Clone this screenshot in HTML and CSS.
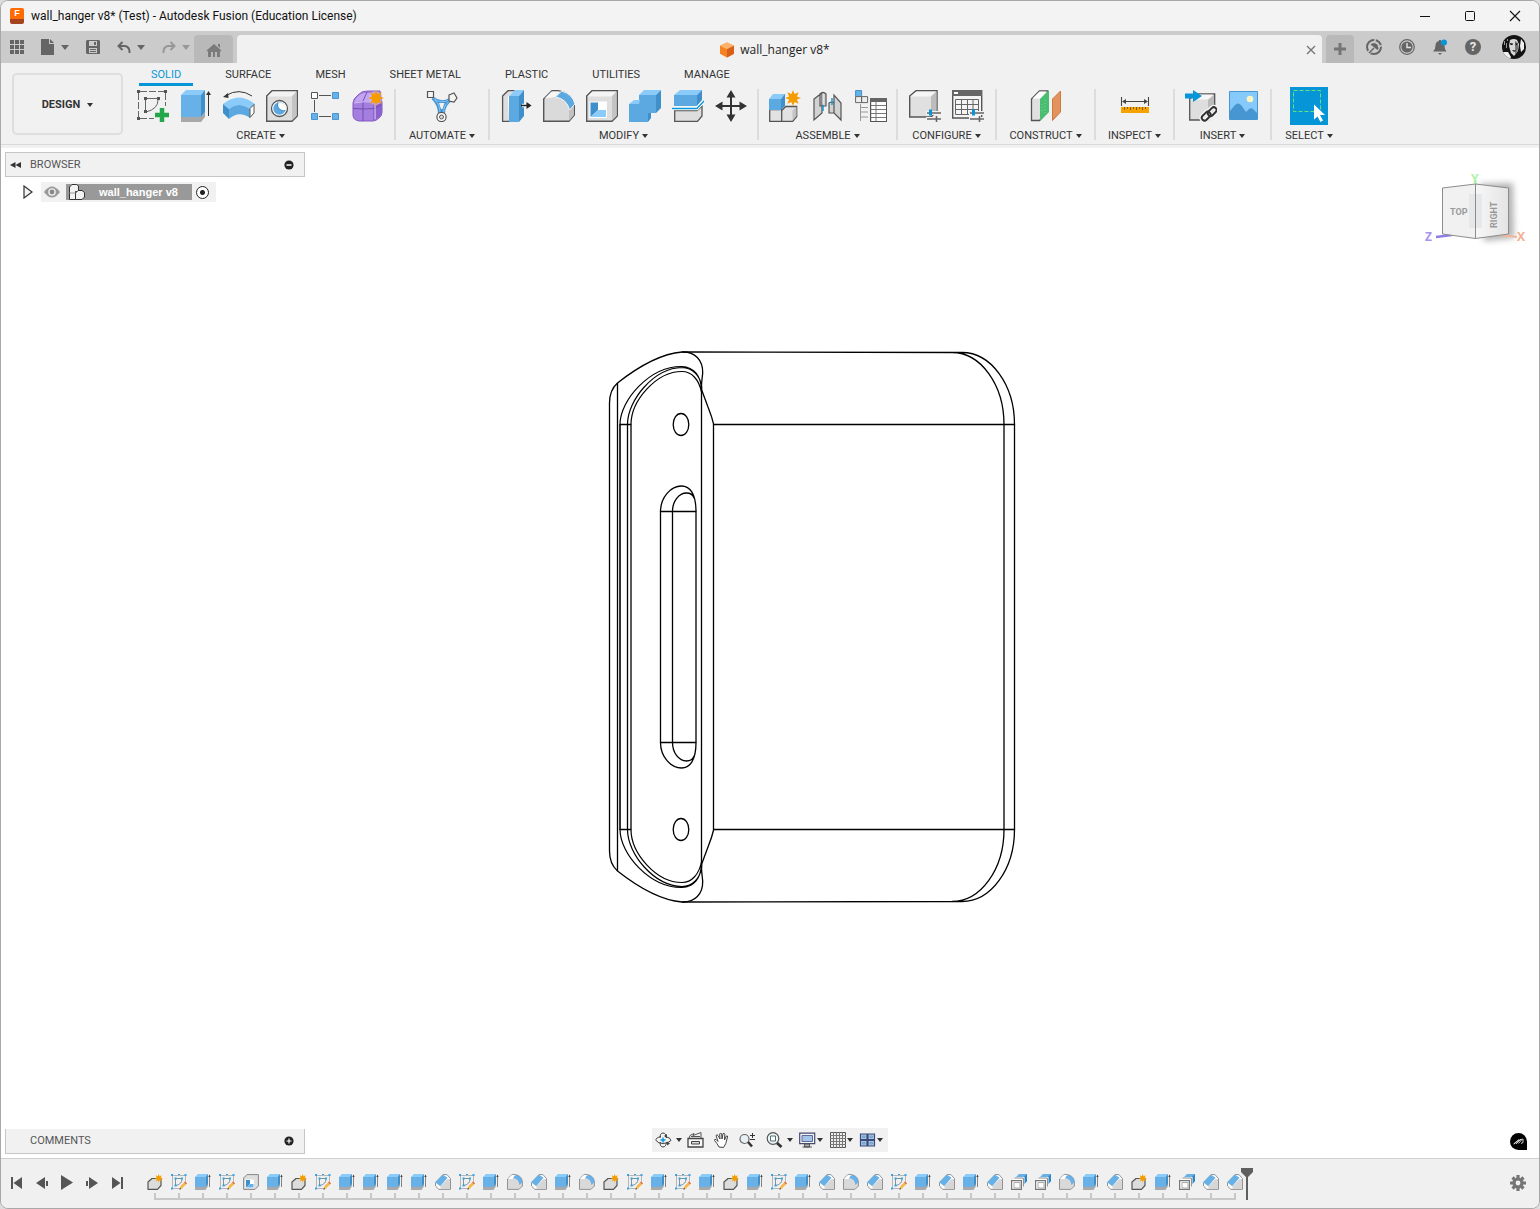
FILE: index.html
```html
<!DOCTYPE html>
<html lang="en">
<head>
<meta charset="utf-8">
<title>wall_hanger v8* (Test) - Autodesk Fusion (Education License)</title>
<link rel="stylesheet" href="styles.css">
</head>
<body>
<svg class="sprite" width="0" height="0" aria-hidden="true">
  <defs>
    <symbol id="star" viewBox="-8 -8 16 16"><path fill="#f59c00" d="M8 0 3.900 1.600 5.700 5.700 1.600 3.900 0 8-1.600 3.900-5.700 5.700-3.900 1.600-8 0-3.900-1.600-5.700-5.700-1.600-3.900 0-8 1.600-3.900 5.700-5.700 3.900-1.600z"/></symbol>
    <symbol id="tl-new" viewBox="0 0 16 16"><path d="M1 8 5 4.500H14V11.500L10.500 15.300H1z" fill="#dcdcdc" stroke="#555" stroke-width="1.200" stroke-linejoin="round"/><use href="#star" x="7.500" y="0" width="8.500" height="8.500"/></symbol>
    <symbol id="tl-sketch" viewBox="0 0 16 16"><path d="M1.500 1v13.500H9M1.500 1.500H14.500V9" fill="none" stroke="#b5b5b5"/><path d="M4.500 5v6.500M5 4.500h6M11 5q0 5-6 6.500" fill="none" stroke="#6f8796" stroke-width=".9"/><path d="M0 0h2v2H0zM7 0h2v1H7zM13.500 0h2v2h-2zM0 13.500h2v2H0zM3.500 3.500h2v2h-2zM10 3.500h2v2h-2zM3.500 10.500h2v2h-2z" fill="#39a3e0"/><path d="M8.500 15.500 9.500 12 13 8.500l2 2-4 4z" fill="#f7b84d"/><path d="m13 8.500 1-1 2 2-1 1z" fill="#dd6a32"/><path d="m8.300 15.700.7-2 1.300 1.300z" fill="#444"/></symbol>
    <symbol id="tl-extrude" viewBox="0 0 16 16"><path d="M0 12.500h10.500l2.500-3V12l-2.500 4H0z" fill="#a9a9a9"/><path d="M0 3h10.500v10H0z" fill="#67b1e8"/><path d="M0 3 3 0h10l-2.500 3z" fill="#8bcbf9"/><path d="m10.500 3 2.500-3v10l-2.500 3z" fill="#3f8fcb"/><path d="M14.500 2v11" stroke="#777" stroke-width=".9"/><path d="m13.300 3 1.200-2.500L15.700 3z" fill="#444"/></symbol>
    <symbol id="tl-shell" viewBox="0 0 16 16"><path d="M.6 4 4 .6h11.400V12L12 15.400H.6z" fill="#dedede" stroke="#888"/><path d="M2.500 5.500H11V14H2.500z" fill="#fff"/><path d="M3 6h4v4l-4 3.500z" fill="#3f8fcb"/><path d="M3 13.500 7 10h3.500v3.500z" fill="#67b1e8"/></symbol>
    <symbol id="tl-fillet" viewBox="0 0 16 16"><path d="M.5 5 5 .6h3q7 1 7.400 7.400V12L12 15.400H.5z" fill="#d9d9d9" stroke="#929292"/><path d="M1 5 5 1h3L5.500 5z" fill="#fff"/><path d="M6 4 9 .8Q15 2 15.500 8L12.500 11Q12 5 6 4z" fill="#67b1e8"/></symbol>
    <symbol id="tl-chamfer" viewBox="0 0 16 16"><path d="M.5 8.500 8 .6h4l3.500 4v10.800H4L.5 12z" fill="#fff" stroke="#929292"/><path d="M5.500 15v-3L12.500 5H15v10z" fill="#d6d6d6"/><path d="M.3 8.300 7.800.500 12.500 3.800 5.200 12.200z" fill="#67b1e8"/></symbol>
    <symbol id="tl-combine" viewBox="0 0 16 16"><path d="M5 3 8 0h8v7l-3 3.500H5z" fill="#67b1e8"/><path d="m13 3 3-3v7l-3 3.500z" fill="#2f86c4"/><path d="M3.500 4.500h8.500v8" fill="none" stroke="#fff" stroke-width="3"/><path d="M3.500 4h8.900v8.500" fill="none" stroke="#888"/><path d="M.6 6.600h9.800v8.800H.6z" fill="#fff" stroke="#777" stroke-width="1.200"/><path d="M3 8.500h6v5.500H3z" fill="#fff" stroke="#999" stroke-width=".8"/></symbol>
  </defs>
</svg>
<div class="app">
  <header class="titlebar">
    <span class="logo">F</span>
    <h1>wall_hanger v8* (Test) - Autodesk Fusion (Education License)</h1>
    <button class="win" aria-label="Minimize"><svg width="12" height="12"><path d="M1 6.500h10" stroke="#111"/></svg></button>
    <button class="win" aria-label="Maximize"><svg width="12" height="12"><rect x="1.500" y="1.500" width="9" height="9" rx="1" fill="none" stroke="#111"/></svg></button>
    <button class="win" aria-label="Close"><svg width="12" height="12"><path d="m1 1 10 10M11 1 1 11" stroke="#111" stroke-width="1.100"/></svg></button>
  </header>

  <nav class="docbar" aria-label="Documents">
    <div class="quick">
      <button aria-label="Data panel"><svg width="14" height="14" fill="#656565"><path d="M0 0h4v4H0zM5 0h4v4H5zM10 0h4v4h-4zM0 5h4v4H0zM5 5h4v4H5zM10 5h4v4h-4zM0 10h4v4H0zM5 10h4v4H5zM10 10h4v4h-4z"/></svg></button>
      <button aria-label="File"><svg width="14" height="16" fill="#656565"><path d="M0 0h8v5h5v11H0z"/><path d="m9 0 4 4H9z"/></svg><i class="caret"></i></button>
      <button aria-label="Save"><svg width="14" height="14"><path fill="#656565" fill-rule="evenodd" d="M1 0h12l1 1v13H1l-1-1V1zM3 1v5h8V1zM3 8v5h8V8z"/><path fill="#656565" d="M8 2h2v3H8zM4 9h6v1H4zM4 11h6v1H4z"/></svg></button>
      <button aria-label="Undo"><svg width="14" height="13"><path d="M1 5h7q5 1 4.500 7M5.500 1 1.500 5l4 4" fill="none" stroke="#656565" stroke-width="2"/></svg><i class="caret"></i></button>
      <button aria-label="Redo" class="off"><svg width="14" height="13"><path d="M13 5H6Q1 6 1.500 12M8.500 1l4 4-4 4" fill="none" stroke="#656565" stroke-width="2"/></svg><i class="caret"></i></button>
    </div>
    <button class="home" aria-label="Home"><svg width="16" height="15" fill="#7b7b7b"><path d="m8 1 7.500 6.500-1 1L14 8v6h-3V9H9v5H7V9H5v5H2V8l-.5.500-1-1zM12 1h2v4l-2-2z"/></svg></button>
    <div class="doctab">
      <span class="docname"><svg width="16" height="16"><path d="m8 .5 7 3.200v8L8 15.500l-7-3.800v-8z" fill="#f58220"/><path d="m8 .5 7 3.200-7 3.600-7-3.600z" fill="#ffb26b"/><path d="M8 7.300v8.200l7-3.800v-8z" fill="#d9601a"/></svg>wall_hanger v8*</span>
      <button aria-label="Close document"><svg width="10" height="10"><path d="m1 1 8 8M9 1 1 9" stroke="#777" stroke-width="1.400"/></svg></button>
    </div>
    <button class="add" aria-label="New document"><svg width="14" height="14"><path d="M7 1v12M1 7h12" stroke="#757575" stroke-width="3"/></svg></button>
    <div class="status">
      <button aria-label="Extensions"><svg width="16" height="16"><circle cx="8" cy="8" r="7" fill="none" stroke="#656565" stroke-width="2"/><path d="M2.500 14 7 9.500" stroke="#cbcbcb" stroke-width="3.500"/><path d="M3 14 8 9" stroke="#656565" stroke-width="1.400"/><path d="M4.500 5.500 11.500 11q2.500-2.500 0-5L10 4.500Q7 3 4.500 5.500z" fill="#656565"/><path d="m9.500 0-1.500 4M16 6.500l-4 1.500" stroke="#cbcbcb" stroke-width="1.600"/></svg></button>
      <button aria-label="Job status"><svg width="16" height="16"><circle cx="8" cy="8" r="7.300" fill="none" stroke="#656565" stroke-width="1.200"/><circle cx="8" cy="8" r="5.600" fill="#656565"/><path d="M8 4v4.500h4" fill="none" stroke="#e4e4e4" stroke-width="1.400"/></svg></button>
      <button aria-label="Notifications"><svg width="16" height="16"><path d="M1 12.500q2.500-2 2.500-6T7 2V1h2v1q3.500.500 3.500 4.500t2 6z" fill="#656565"/><path d="M6 14h4l-2 2z" fill="#656565"/><circle cx="12" cy="3.500" r="3" fill="#0696d7"/></svg></button>
      <button class="help" aria-label="Help">?</button>
      <button class="me" aria-label="Account"><svg width="24" height="24" viewBox="0 0 24 24"><clipPath id="face"><circle cx="12" cy="12" r="12"/></clipPath><g clip-path="url(#face)"><path fill="#131313" d="M0 0h24v24H0z"/><path fill="#d8d8d8" d="M8 5q4-2 7 0l2 4-1 7-4 5-3-3-2-7z"/><path fill="#777" d="m13 6 3 2v7l-3 5 0-8z"/><path fill="#f0f0f0" d="m1 17 5 0 3 5-1 2H2zM19 4l3 4v6l-3 3-1-6z"/><path fill="#1a1a1a" d="m8 8 3 .5-.5 1.500-2 0zM13 8.500l3 0-1.500 2zM10 15l4 .5-2 1.500z"/><path fill="#999" d="M2 6h1v4H2zM4 8h1v5H4zM5 4h1v2H5z"/></g></svg></button>
    </div>
  </nav>

  <section class="ribbon">
    <button class="workspace">DESIGN <i class="caret"></i></button>
    <div class="tools">
      <div class="tabs">
        <button class="on">SOLID</button><button>SURFACE</button><button>MESH</button><button>SHEET METAL</button><button>PLASTIC</button><button>UTILITIES</button><button>MANAGE</button>
      </div>
      <div class="groups">
        <div class="group create">
          <div class="icons">
            <button aria-label="Create sketch"><svg viewBox="0 0 32 32"><path d="M3 1.500h24M1.500 3v24M28.500 3v13M3 28.500h14" fill="none" stroke="#666" stroke-dasharray="7 2"/><path d="M8.500 10v10M10 8.500h10M21 10q0 9-12 12" fill="none" stroke="#666"/><path fill="#555" d="M0 0h3v3H0zM27 0h3v3h-3zM0 27h3v3H0zM7 7h3v3H7zM20 7h3v3h-3zM7 20h3v3H7z"/><path d="M25 18v14M18 25h14" stroke="#22a84b" stroke-width="4.500"/></svg></button>
            <button aria-label="Extrude"><svg viewBox="0 0 32 32"><path d="M1 27h20l4-5v5l-4 5H1z" fill="#a8a8a8"/><path d="M1 5h20v22H1z" fill="#67b1e8"/><path d="m1 5 5-5h19l-4 5z" fill="#8bcbf9"/><path d="m21 5 4-5v22l-4 5z" fill="#3f8fcb"/><path d="M28.500 4v22" stroke="#333"/><path d="m26 5 2.500-4L31 5z" fill="#333"/></svg></button>
            <button aria-label="Revolve"><svg viewBox="0 0 32 32"><path d="M0 14q16-13 32 0L27 19q-10-8-21 0z" fill="#8bcbf9"/><path d="M6 19q10-8 21 0v9q-11-8-21 1z" fill="#5ca9e2"/><path d="m0 14 6 5v10l-6-6z" fill="#3f8fcb"/><path d="m27 18.500 4-4V23l-4 4.500z" fill="#fff" stroke="#555"/><path d="M3 5.500Q16-2.500 29 6" fill="none" stroke="#333"/><path d="m0 7 5-4 .5 5z" fill="#333"/></svg></button>
            <button aria-label="Hole"><svg viewBox="0 0 32 32"><path d="M.7 6 6 .7h25.300V26L26 31.300H.7z" fill="#dedede" stroke="#555" stroke-width="1.400"/><path d="m1.500 6.500 5-5h24l-5 5z" fill="#f2f2f2"/><path d="m26 6.500 4.500-5V26L26 30.500z" fill="#c4c4c4"/><circle cx="13.500" cy="18.500" r="8" fill="#fff" stroke="#555" stroke-width="1.300"/><circle cx="13.500" cy="18.500" r="6.200" fill="#5ca9e2"/><path d="M12 12.500a6 6 0 0 0 8 8q1-8-8-8z" fill="#fff"/><path d="M12 12.500a6 6 0 0 0 7.500 8" fill="none" stroke="#3f8fcb" stroke-width="1.200"/></svg></button>
            <button aria-label="Pattern"><svg viewBox="0 0 32 32"><path d="M10 5.500h12M10 26.500h12M5.500 10v12" stroke="#555"/><path d="M2.500 2.500h6v6h-6z" fill="#fff" stroke="#555"/><path d="M23.500 2.500h6v6h-6zM2.500 23.500h6v6h-6zM23.500 23.500h6v6h-6z" fill="#67b1e8" stroke="#4795d1"/></svg></button>
            <button aria-label="Create form"><svg viewBox="0 0 32 32"><path d="M1 13Q1 9 6 5l4-3q3-1 8-1h10l2 12v9q0 4-3 6-3 3-6 3H7q-6-1-6-6z" fill="#a57fdf" stroke="#8258c4"/><path d="M2 12q4-8 10-9h12l-3 8q-9 0-19 1z" fill="#c3a5f0"/><path d="m24 15 6-2v8q-1 6-6 8z" fill="#8b62cc"/><path d="M1 18.500q12 1 22 0l6-4M11 31V11l4-9M22 12v18" fill="none" stroke="#6e47ae" stroke-width=".9"/><path d="M2 13q10-2 20-1l6-5M23 12v17" fill="none" stroke="#d5bff5"/><circle cx="23.500" cy="8" r="7" fill="#d5bff5" opacity=".5"/><use href="#star" x="16" y="0" width="16" height="16"/></svg></button>
          </div>
          <button class="menu">CREATE <i class="caret"></i></button>
        </div>
        <div class="group automate">
          <div class="icons"><button aria-label="Automated modeling"><svg viewBox="0 0 32 32"><path d="M8 7q7 6 15.500 1L26 11q-7 4-7 13h-7Q12 15 5.500 9z" fill="#4795d1"/><path d="M7.500 8.500q8 6 16.500 1M14 23q0-8-5-13M17.500 23q0-8 6-12" fill="none" stroke="#86c9fb"/><path d="M13 13h5.500l-2 6h-1.500z" fill="#f1f1f1"/><path d="M1.500 1.500h6v6h-6zM23 5l5-2 3 5-3 4-5-1z" fill="#f5f5f5" stroke="#555" stroke-width="1.200"/><circle cx="15.500" cy="27" r="4.600" fill="#fff" stroke="#555" stroke-width="1.200"/><circle cx="15.500" cy="27" r="2" fill="#ddd" stroke="#555"/></svg></button></div>
          <button class="menu">AUTOMATE <i class="caret"></i></button>
        </div>
        <div class="group modify">
          <div class="icons">
            <button aria-label="Press pull"><svg viewBox="0 0 32 32"><path d="M2.600 6 8 .7h6V25L9 31.300H2.600z" fill="#dedede" stroke="#555" stroke-width="1.300"/><path d="M8 7 14 1v24l-5 6z" fill="#fff"/><path d="M9 6h10v26H9z" fill="#5ca9e2"/><path d="m9 6 6-6h9l-5 6z" fill="#8bcbf9"/><path d="m19 6 5-6v26l-5 6z" fill="#3f8fcb"/><path d="M22 15.500h6" stroke="#fff" stroke-width="3.500"/><path d="M21 15.500h7" stroke="#222" stroke-width="1.400"/><path d="m26.500 12 5 3.500-5 3.500z" fill="#222"/></svg></button>
            <button aria-label="Fillet"><svg viewBox="0 0 32 32"><path d="M.7 9 9 .7h6q14 2 16.300 15V25L26 31.300H.7z" fill="#dadada" stroke="#555" stroke-width="1.400"/><path d="m1.500 8.500 7-7H17L12 7z" fill="#f7f7f7"/><path d="m26 19 5-4v10l-5 6z" fill="#c2c2c2"/><path d="m12.500 7 6-6q11 3 13.500 13l-5.500 6Q24 9 12.500 7z" fill="#5ca9e2" stroke="#f6f6f6"/></svg></button>
            <button aria-label="Shell"><svg viewBox="0 0 32 32"><path d="M.7 6 6 .7h25.300V26L26 31.300H.7z" fill="#dedede" stroke="#555" stroke-width="1.400"/><path d="m1.500 6.500 5-5h24l-5 5z" fill="#f4f4f4"/><path d="m26 6.500 4.500-5V26L26 30.500z" fill="#c4c4c4"/><path d="M3.500 11.500H21v16.500H3.500z" fill="#fff"/><path d="M4.500 12.500H12V20l-7.500 7z" fill="#3f8fcb"/><path d="M4.500 27 12 20h8v7z" fill="#8bcbf9"/></svg></button>
            <button aria-label="Combine"><svg viewBox="0 0 32 32"><path d="M0 14h10V5h17v18h-8v9H0z" fill="#5ca9e2"/><path d="m0 14 5-4h6l-1 4zM10 5l5-5h17l-5 5z" fill="#8bcbf9"/><path d="m27 5 5-5v18l-5 5zM19 23h3v5l-3 4z" fill="#3f8fcb"/></svg></button>
            <button aria-label="Split body"><svg viewBox="0 0 32 32"><path d="M2.700 20.500H25L30 16v10l-4.500 5.300H2.700z" fill="#dedede" stroke="#555" stroke-width="1.300"/><path d="M2 5h23v11H2z" fill="#5ca9e2"/><path d="m2 5 6-5h22l-5 5z" fill="#8bcbf9"/><path d="m25 5 5-5v10l-5 6z" fill="#3f8fcb"/><path d="M0 18.500h25L32 11" fill="none" stroke="#fff" stroke-width="3.500"/><path d="M0 18.500h25L32 11" fill="none" stroke="#0696d7" stroke-width="1.400"/></svg></button>
            <button aria-label="Move"><svg viewBox="0 0 32 32"><path d="M16 5v22M5 16h22" stroke="#333" stroke-width="2"/><path d="m16 0 4.500 7.500h-9zM16 32l4.500-7.500h-9zM0 16l7.500-4.500v9zM32 16l-7.500-4.500v9z" fill="#333"/></svg></button>
          </div>
          <button class="menu">MODIFY <i class="caret"></i></button>
        </div>
        <div class="group assemble">
          <div class="icons">
            <button aria-label="New component"><svg viewBox="0 0 32 32"><path d="M.7 19.500h12v11.800H.7zM12.700 20.500l4-4h11v10l-4 4.800h-11z" fill="#e2e2e2" stroke="#555" stroke-width="1.300"/><path d="m23.500 20.500 4-3.500v9l-4 4.500z" fill="#c4c4c4"/><path d="M0 9h12v11H0z" fill="#5ca9e2"/><path d="m0 9 4-5h13l-5 5z" fill="#8bcbf9"/><path d="m12 9 4-5v12l-4 4z" fill="#3f8fcb"/><use href="#star" x="16" y="0" width="16" height="16"/></svg></button>
            <button aria-label="Joint"><svg viewBox="0 0 32 32"><g fill="#d2d2d2" stroke="#555" stroke-width="1.200"><path d="M2 9 10 3v20l-8 7zM8 4q3-3 6 0v12H8zM29 30l-7-7V5l7 8zM17 13q3-2 5 0v10h-5z"/></g><path d="M11 15v6M20 8v7" stroke="#0696d7" stroke-width="1.400"/><path d="M11 3.500v11" stroke="#f2f2f2"/></svg></button>
            <button aria-label="Bill of materials"><svg viewBox="0 0 32 32"><path d="M.6.600h6v6h-6z" fill="#67b1e8" stroke="#3f8fcb"/><path d="M.6 6.600h6v6h-6zM6.600 6.600h6v6h-6z" fill="#eee" stroke="#666"/><path d="M5.500 14v17M5.500 17.500H13M5.500 22H13M5.500 27H13" stroke="#999"/><path d="M15.600 8.600h16v23h-16z" fill="#fff" stroke="#555" stroke-width="1.200"/><path d="M15 8h17v4H15z" fill="#666"/><path d="M16 15.500h15M16 19.500h15M16 23.500h15M16 27.500h15M21 12v19" stroke="#777"/></svg></button>
          </div>
          <button class="menu">ASSEMBLE <i class="caret"></i></button>
        </div>
        <div class="group configure">
          <div class="icons">
            <button aria-label="Configure"><svg viewBox="0 0 32 32"><path d="M.7 6 7 .7h21V21L22 27H.7z" fill="#e0e0e0" stroke="#555" stroke-width="1.400"/><path d="m1.500 6.500 6-5h20l-6 5z" fill="#f5f5f5"/><path d="m22 6.500 5.500-5V21L22 26z" fill="#bcbcbc"/><path d="M17 23h15M17 29h15" stroke="#f1f1f1" stroke-width="4"/><path d="M18 23h14M18 29h14M27.500 26v6" stroke="#666" stroke-width="1.600"/><path d="M21.500 19.500v6" stroke="#0696d7" stroke-width="3"/></svg></button>
            <button aria-label="Configuration table"><svg viewBox="0 0 32 32"><path d="M.7.700h29V28H.7z" fill="#f5f5f5" stroke="#555" stroke-width="1.400"/><path d="M0 0h30v6H0z" fill="#666"/><path d="M2 2h4v2H2z" fill="#fff"/><path d="M3.500 9.500h23v15h-23zM3.500 14.500h23M3.500 19.500h23M9.500 9.500v15M15.500 9.500v15M21 9.500v15" fill="none" stroke="#666"/><path d="M17 23h15M17 29h15" stroke="#f1f1f1" stroke-width="4"/><path d="M18 23h14M18 29h14M27.500 26v6" stroke="#666" stroke-width="1.600"/><path d="M21.500 19.500v6" stroke="#0696d7" stroke-width="3"/></svg></button>
          </div>
          <button class="menu">CONFIGURE <i class="caret"></i></button>
        </div>
        <div class="group construct">
          <div class="icons"><button aria-label="Offset plane"><svg viewBox="0 0 32 32"><path d="m1.500 9 8-8h8v21l-8 8.500h-8z" fill="#e0e0e0" stroke="#555" stroke-width="1.300"/><path d="m2.500 8.500 7-7h7l-6 7z" fill="#fff"/><path d="m10 9 9-9v22l-9 9z" fill="#49bd70"/><path d="M12 14v9M15 10v14" stroke="#7bd795" stroke-dasharray="1 2"/><path d="m22.500 9 8-8v21l-8 8.500z" fill="#e3945c" stroke="#cc7b45"/></svg></button></div>
          <button class="menu">CONSTRUCT <i class="caret"></i></button>
        </div>
        <div class="group inspect">
          <div class="icons"><button aria-label="Measure"><svg viewBox="0 0 32 32"><path d="M2.500 7v9M29.500 7v9M5 11.500h22" stroke="#444" stroke-width="1.100"/><path d="m3 11.500 4-2.500v5zM29 11.500l-4-2.500v5z" fill="#444"/><path d="M2 17h28v6H2z" fill="#f5a300"/><path d="M5.500 17v3M8.500 17v2M11.500 17v3M14.500 17v2M17.500 17v3M20.500 17v2M23.500 17v3M26.500 17v2" stroke="#8a5c00"/></svg></button></div>
          <button class="menu">INSPECT <i class="caret"></i></button>
        </div>
        <div class="group insert">
          <div class="icons">
            <button aria-label="Insert derive"><svg viewBox="0 0 32 32"><path d="m4.700 9 7-5h18v18l-6 8h-19z" fill="#dedede" stroke="#555" stroke-width="1.300"/><path d="m5.500 9.500 7-5h16l-6 5z" fill="#f7f7f7"/><path d="m23 10 6-5v16l-6 7z" fill="#bbb"/><path d="M0 3.500h8V0l9 6-9 6V8.500H0z" fill="#0696d7"/><g fill="none" stroke="#f4f4f4" stroke-width="5"><rect x="16" y="23.500" width="10" height="5.500" rx="2.750" transform="rotate(-45 21 26)"/><rect x="22" y="19" width="10" height="5.500" rx="2.750" transform="rotate(-45 27 21.500)"/></g><g fill="none" stroke="#333" stroke-width="2"><rect x="16" y="23.500" width="10" height="5.500" rx="2.750" transform="rotate(-45 21 26)"/><rect x="22" y="19" width="10" height="5.500" rx="2.750" transform="rotate(-45 27 21.500)"/></g></svg></button>
            <button aria-label="Canvas"><svg viewBox="0 0 32 32"><path d="M1.500 1.500h28v28h-28z" fill="#86c9fb" stroke="#4795d1"/><path d="M2 21 7 15q3-3 6 0l5 7 3-3q3-2 5 1l3 3v6H2z" fill="#4795d1"/><circle cx="22" cy="9" r="3.300" fill="#fff3bf"/></svg></button>
          </div>
          <button class="menu">INSERT <i class="caret"></i></button>
        </div>
        <div class="group select">
          <div class="icons"><button class="active" aria-label="Select"><svg class="wide" viewBox="0 0 38 38"><path d="M3.500 3.500h27v21h-27z" fill="none" stroke="#6be07b" stroke-dasharray="4 2"/><path d="M24 17.500v15l3.500-3 3 5.500 2.500-1.500-3-5.500h5z" fill="#fff"/></svg></button></div>
          <button class="menu">SELECT <i class="caret"></i></button>
        </div>
      </div>
    </div>
  </section>

  <main class="stage">
    <svg class="model" viewBox="1 148 1538 1010" role="img" aria-label="wall_hanger model">
      <g fill="none" stroke="#000" stroke-width="1.300">
        <path d="M609.500 403v448M617.500 383v488M627.500 424v406M631 424v406M701.500 386v482M713.500 424v406M1004 424v406M1014.500 424v406M660.500 511v232M672.500 511v232M696 511v232"/>
        <path d="M620 424v406" stroke="#333" stroke-width="2"/>
        <g id="end">
          <path d="M609.500 403C609.500 394 613 387 617.500 383 634 370 658 354 682 352 695 351.500 703 360 702.700 373 702 380 701 385 701.700 390L708 407Q712 417 713.700 424.500"/>
          <path d="M682 352 957 352.500H962A52.500 72 0 0 1 1014.500 424.500M952 352.500A52 72 0 0 1 1004 424.500"/>
          <path d="M620 424.500C620 400 650 366 682 366.500 694 367 701 376 701.500 390M627.500 424.500C627.500 400 654 368 682 367.500 693 368 700 376 701.500 386M631 424.500C631 401 656 371.500 682 371.500 692 371.500 699 380 701.500 392" stroke-width="1.200"/>
          <path d="M620 424.500h11M713.500 424.500h301M660.500 511.500H696"/>
          <ellipse cx="681" cy="424.500" rx="7.800" ry="11"/>
          <path d="M660.500 511.500C660.500 497 671 486 681.500 486 690 486 696 494 696 511.500M672.500 511.500C672.500 501 679 493 686.500 493 690 493 693 495 694 498"/>
        </g>
        <use href="#end" transform="matrix(1 0 0 -1 0 1254)"/>
      </g>
    </svg>
    <div class="overlay">
      <div class="top">
        <aside class="browser">
          <div class="panel head"><svg width="12" height="8" fill="#333"><path d="M5.500 1v6L0 4zM11 1v6L5.500 4z"/></svg><span>BROWSER</span><button aria-label="Collapse panel"><svg width="10" height="10"><circle cx="5" cy="5" r="4.600" fill="#222"/><path d="M2.500 5h5" stroke="#fff" stroke-width="1.400"/></svg></button></div>
          <div class="tree">
            <button aria-label="Expand"><svg width="10" height="14"><path d="M1 1v12l8-6z" fill="#f3f3f3" stroke="#333" stroke-width="1.200"/></svg></button>
            <div class="node">
              <svg width="16" height="12"><path d="M0 6q8-11 16 0-8 11-16 0z" fill="#999"/><circle cx="8" cy="6" r="3.800" fill="#eee"/><circle cx="8" cy="6" r="2.400" fill="#888"/></svg>
              <div class="item"><svg width="16" height="16"><g fill="#f2f2f2" stroke="#333"><path d="M.5 3 3 .5h4.500L9.500 2v5.500h-3v8h-6z"/><path d="M6.500 9 9 6.500h4l2.500 2V13L13 15.500H6.500z"/><path d="M.5 9h6" stroke="#999"/></g></svg><span>wall_hanger v8</span></div>
              <label class="radio"><input type="radio" name="active" aria-label="Activate component" checked></label>
            </div>
          </div>
        </aside>
        <svg class="cube" width="116" height="80" viewBox="1418 168 116 80" role="img" aria-label="View cube">
          <defs><filter id="soft" x="-30%" y="-30%" width="160%" height="160%"><feGaussianBlur stdDeviation="3"/></filter><linearGradient id="side"><stop stop-color="#f7f7f7"/><stop offset="1" stop-color="#e4e4e4"/></linearGradient></defs>
          <path d="m1480 184 33-1 1 55-30 3z" fill="#999" opacity=".75" filter="url(#soft)"/>
          <path d="M1475.500 180v4" stroke="#b8f5b4" stroke-width="2.500"/><path d="M1436 237 1452 235" stroke="#8f7be8" stroke-width="2.500"/><path d="m1500 235 17 2" stroke="#f3b59d" stroke-width="2"/>
          <path d="m1442.500 188 33-4v54.500l-33-4.500z" fill="#f1f1f1"/><path d="m1475.500 184 33 4v46l-33 4.500z" fill="url(#side)"/>
          <path d="M1469 194h13v34h-13z" fill="#dfe2e6" opacity=".7"/>
          <path d="m1442.500 188 33-4 33 4v46l-33 4.500-33-4.500zM1475.500 184v54" fill="none" stroke="#8c8c8c"/>
          <g class="cubetext"><text x="1450" y="215">TOP</text><text transform="translate(1497 228) rotate(-90)">RIGHT</text></g>
          <g class="axes"><text x="1471" y="183" fill="#aef3aa">Y</text><text x="1425" y="241" fill="#a893f0">Z</text><text x="1517" y="241" fill="#f3ad92">X</text></g>
        </svg>
      </div>
      <div class="bottom">
        <div class="panel comments"><span>COMMENTS</span><button aria-label="Add comment"><svg width="10" height="10"><circle cx="5" cy="5" r="4.600" fill="#222"/><path d="M2.500 5h5M5 2.500v5" stroke="#fff" stroke-width="1.200"/></svg></button></div>
        <div class="navbar">
          <button class="drop roomy" aria-label="Orbit"><svg width="17" height="16"><g fill="none" stroke="#444"><path d="M6 4.500Q0 6 1 8.500q2 3 7 3t8-3q0-3-6-4"/><path d="M5 6Q5 1 8 1t3.500 5M5 10q0 5 3 5t3.500-5"/></g><path d="M5.500 8h5M8 5.500v5" stroke="#0696d7" stroke-width="1.400"/><path d="m12 2 0 4-3-2zM12 9.500l3 2-3 2z" fill="#444"/></svg><i class="caret"></i></button>
          <button aria-label="Look at"><svg width="17" height="16"><path d="M1 6.500h15v8.500H1z" fill="#f7f7f7" stroke="#444" stroke-width="1.300"/><path d="M4.500 9.500h8V12h-8z" fill="#ddd" stroke="#444"/><path d="m2 6 1-2.500 4-2-1 2 8-3v5.500M4 4.500h9" fill="none" stroke="#555"/></svg></button>
          <button aria-label="Pan"><svg width="17" height="16"><path d="M6 15Q4 11 1.500 8.500 1 7 3 7.500L5 9.500 3 3.500q1-1.500 2 0L7 7 6.700 2q1-2 2 0L9 7l1-5.300q1.500-1 1.800.500L11.500 8l1.800-4q1.700-.5 1.200 1-1.500 8-4 10.500z" fill="#fff" stroke="#444" stroke-linejoin="round"/></svg></button>
          <button aria-label="Zoom"><svg width="17" height="16"><circle cx="5.500" cy="7" r="4.500" fill="#e7f0f5" stroke="#666" stroke-width="1.200"/><path d="m9 10 4 4.500" stroke="#333" stroke-width="2.500"/><path d="M11 3.500h5M13.500 1v5M11 7.500h5" stroke="#333"/></svg></button>
          <button class="drop roomy" aria-label="Fit"><svg width="17" height="16"><circle cx="7" cy="6.500" r="5.800" fill="#eef5f7" stroke="#555" stroke-width="1.200"/><path d="M4.500 4h5v5h-5z" fill="#fff" stroke="#507070"/><path d="m11 11 4.500 4" stroke="#333" stroke-width="2.800"/></svg><i class="caret"></i></button>
          <button class="drop" aria-label="Display settings"><svg width="17" height="16"><path d="M.7 1.200h15v10.500H.7z" fill="#f5f5f5" stroke="#454a6b" stroke-width="1.200"/><path d="M3 3.500h10.500v6H3z" fill="#a4c4e8" stroke="#5a6aa0"/><path d="M5.500 12h5v3h-5zM3.500 15h9.500" fill="#aaa" stroke="#555"/></svg><i class="caret"></i></button>
          <button class="drop" aria-label="Grid and snaps"><svg width="17" height="16"><path d="M1.500.500h15v15h-15z" fill="#eee" stroke="#555"/><path d="M4.500 0v16M7.500 0v16M10.500 0v16M13.500 0v16M1 3.500h16M1 6.500h16M1 9.500h16M1 12.500h16" stroke="#777"/></svg><i class="caret"></i></button>
          <button class="drop" aria-label="Viewports"><svg width="17" height="16"><path d="M1.500 2h6.500v5.500H1.500zM9 2h6.500v5.500H9zM1.500 8.500h6.500V14H1.500zM9 8.500h6.500V14H9z" fill="#a8c8e8" stroke="#3d4878" stroke-width="1.200"/><path d="M3.500 4h2.500v1.500H3.500zM11 4h2.500v1.500H11zM3.500 10.500h2.500V12H3.500zM11 10.500h2.500V12H11z" fill="none" stroke="#6f9ecb"/></svg><i class="caret"></i></button>
        </div>
        <button class="assist" aria-label="Assistant"><svg width="17" height="17"><path d="M8.500 0a8.500 8.500 0 0 1 8.500 8.500V17H8.500a8.500 8.500 0 0 1 0-17z"/><path d="M3.500 11 9 6.500M6 11l5-5M8.500 10.500l3-3.500M4 11q5-5 9-5v3.500l-2 1" fill="none" stroke="#e8e8e8" stroke-width=".9"/></svg></button>
      </div>
    </div>
  </main>

  <footer class="timeline">
    <div class="play">
      <button aria-label="Start"><svg width="14" height="14" fill="#555"><path d="M1 1h2v12H1zM12 1v12L3.500 7z"/></svg></button>
      <button aria-label="Step back"><svg width="14" height="14" fill="#555"><path d="M10 1v12L1 7zM11 5h2v5h-2z"/></svg></button>
      <button aria-label="Play"><svg width="14" height="16" fill="#555"><path d="M1 0v15l12-7.500z"/></svg></button>
      <button aria-label="Step forward"><svg width="14" height="14" fill="#555"><path d="M4 1v12l9-6zM1 5h2v5H1z"/></svg></button>
      <button aria-label="End"><svg width="14" height="14" fill="#555"><path d="M11 1h2v12h-2zM2 1v12l8.500-6z"/></svg></button>
    </div>
    <div class="history">
      <ol>
        <li><svg><use href="#tl-new"/></svg></li><li><svg><use href="#tl-sketch"/></svg></li><li><svg><use href="#tl-extrude"/></svg></li><li><svg><use href="#tl-sketch"/></svg></li><li><svg><use href="#tl-shell"/></svg></li><li><svg><use href="#tl-extrude"/></svg></li>
        <li><svg><use href="#tl-new"/></svg></li><li><svg><use href="#tl-sketch"/></svg></li><li><svg><use href="#tl-extrude"/></svg></li><li><svg><use href="#tl-extrude"/></svg></li><li><svg><use href="#tl-extrude"/></svg></li><li><svg><use href="#tl-extrude"/></svg></li><li><svg><use href="#tl-chamfer"/></svg></li><li><svg><use href="#tl-sketch"/></svg></li><li><svg><use href="#tl-extrude"/></svg></li><li><svg><use href="#tl-fillet"/></svg></li><li><svg><use href="#tl-chamfer"/></svg></li><li><svg><use href="#tl-extrude"/></svg></li><li><svg><use href="#tl-fillet"/></svg></li>
        <li><svg><use href="#tl-new"/></svg></li><li><svg><use href="#tl-sketch"/></svg></li><li><svg><use href="#tl-extrude"/></svg></li><li><svg><use href="#tl-sketch"/></svg></li><li><svg><use href="#tl-extrude"/></svg></li>
        <li><svg><use href="#tl-new"/></svg></li><li><svg><use href="#tl-extrude"/></svg></li><li><svg><use href="#tl-sketch"/></svg></li><li><svg><use href="#tl-extrude"/></svg></li><li><svg><use href="#tl-chamfer"/></svg></li><li><svg><use href="#tl-fillet"/></svg></li><li><svg><use href="#tl-chamfer"/></svg></li><li><svg><use href="#tl-sketch"/></svg></li><li><svg><use href="#tl-extrude"/></svg></li><li><svg><use href="#tl-chamfer"/></svg></li><li><svg><use href="#tl-extrude"/></svg></li><li><svg><use href="#tl-chamfer"/></svg></li><li><svg><use href="#tl-combine"/></svg></li><li><svg><use href="#tl-combine"/></svg></li><li><svg><use href="#tl-fillet"/></svg></li><li><svg><use href="#tl-extrude"/></svg></li><li><svg><use href="#tl-chamfer"/></svg></li>
        <li><svg><use href="#tl-new"/></svg></li><li><svg><use href="#tl-extrude"/></svg></li><li><svg><use href="#tl-combine"/></svg></li><li><svg><use href="#tl-chamfer"/></svg></li><li><svg><use href="#tl-chamfer"/></svg></li>
      </ol>
      <div class="rail"></div>
    </div>
    <svg class="marker" width="12" height="32" fill="#5f5f5f"><path d="M0 0h12v4L7 9v23H5V9L0 4z"/></svg>
    <button class="gear" aria-label="Timeline settings"><svg width="16" height="16" viewBox="-8 -8 16 16"><circle r="4" fill="none" stroke="#757575" stroke-width="3.200"/><path d="M0-8v3M0 5v3M-8 0h3M5 0h3M-5.500-5.500l2 2M5.500 5.500l-2-2M-5.500 5.500l2-2M5.500-5.500l-2 2" stroke="#757575" stroke-width="3.200"/></svg></button>
  </footer>
</div>
</body>
</html>
```
FILE: styles.css
```css
* { box-sizing: border-box; }
body { margin: 0; background: #dcdcdc; font: 11px/16px Roboto, "Liberation Sans", sans-serif; color: #333; }
button { margin: 0; padding: 0; border: 0; background: none; font: inherit; color: inherit; display: flex; align-items: center; justify-content: center; }
svg { display: block; flex: none; }
.sprite { position: absolute; }
.caret { flex: none; border: solid transparent; border-width: 4px 3px 0; border-top-color: currentColor; }

.app { min-height: 100vh; display: flex; flex-direction: column; border: 1px solid #a8a8a8; border-radius: 8px; overflow: hidden; background: #f1f1f1; }

.titlebar { height: 30px; display: flex; align-items: center; padding: 0 2px 0 9px; background: #f3f3f3; color: #111; }
.titlebar h1 { margin: 0 auto 0 7px; font: 12px/16px Roboto, "Noto Sans", sans-serif; }
.logo { width: 14px; height: 16px; border-radius: 2px; background: linear-gradient(#ff6b00 70%, #a3431f 70%); color: #fff; font: bold 9px/11px "Liberation Sans", sans-serif; text-align: center; }
.win { width: 45px; height: 30px; }

.docbar { height: 32px; display: flex; background: #cbcbcb; padding-top: 4px; }
.docbar .caret { border-width: 5px 4px 0; }
.quick { width: 193px; display: flex; align-items: center; gap: 17px; padding: 0 0 4px 9px; color: #656565; }
.quick button { gap: 6px; }
.quick .off { opacity: .5; }
.home { width: 39px; background: #b9b9b9; border-radius: 4px 4px 0 0; margin-right: 4px; padding-top: 2px; }
.doctab { flex: 1; display: flex; align-items: center; background: #f1f1f1; border-radius: 4px 4px 0 0; padding: 2px 6px 0; }
.docname { flex: 1; display: flex; justify-content: center; align-items: center; gap: 5px; font: 12px/16px "Open Sans", "Noto Sans", sans-serif; color: #222; }
.add { width: 28px; background: #b9b9b9; border-radius: 4px 4px 0 0; margin: 0 12px 0 4px; }
.status { display: flex; align-items: center; gap: 17px; padding: 0 13px 4px 0; }
.help { width: 16px; height: 16px; border-radius: 50%; background: #656565; color: #e8e8e8; font: bold 13px/16px Roboto, sans-serif; }
.me { margin-left: 4px; }

.ribbon { display: flex; height: 85px; border-bottom: 3px solid #f1f1f1; box-shadow: inset 0 -1px #dadada; }
.workspace { width: 111px; height: 62px; margin: 10px 10px 0 11px; padding-top: 1px; border: 2px solid #dedede; border-radius: 5px; font-weight: 700; gap: 7px; }
.tools { flex: 1; min-width: 0; }
.tabs { display: flex; gap: 20px; height: 23px; padding-left: 6px; }
.tabs button { padding: 3px 12px 0; border-bottom: 3px solid transparent; white-space: nowrap; }
.tabs .on { color: #0696d7; border-color: #0696d7; }
.groups { display: flex; height: 60px; padding-top: 1px; }
.group { flex: none; display: flex; flex-direction: column; align-items: center; padding-right: 2px; background: linear-gradient(#dcdcdc, #dcdcdc) right 2px / 2px 51px no-repeat; }
.create { width: 263px; padding-right: 8px; }
.automate { width: 94px; }
.modify { width: 269px; }
.assemble { width: 139px; }
.configure, .construct { width: 99px; }
.inspect { width: 79px; }
.insert { width: 97px; }
.select { width: 76px; background: none; }
.icons { display: flex; }
.icons button { width: 43px; height: 38px; }
.icons svg { width: 32px; height: 32px; }
.icons .active { width: 38px; background: #0696d7; }
.icons .wide { width: 38px; height: 38px; }
.menu { height: 22px; gap: 3px; padding-top: 1px; white-space: nowrap; }

.stage { flex: 1; display: grid; background: #fff; }
.model, .overlay { grid-area: 1 / 1; width: 100%; }
.model { height: 100%; min-height: 600px; }
.overlay { display: flex; flex-direction: column; justify-content: space-between; padding: 4px; }
.top { display: flex; justify-content: space-between; align-items: flex-start; }
.panel { display: flex; align-items: center; width: 300px; height: 25px; padding: 0 10px 0 24px; border: 1px solid #c6c6c6; background: #f1f1f1; color: #555; }
.panel button { margin-left: auto; }
.head { padding-left: 4px; gap: 8px; }
.tree { display: flex; align-items: center; padding: 5px 0 0 18px; gap: 8px; }
.node { display: flex; align-items: center; height: 20px; background: #f1f1f1; padding: 0 7px 0 3px; }
.item { display: flex; align-items: center; height: 16px; margin: 0 4px 0 6px; padding: 0 14px 0 3px; gap: 14px; background: #999; color: #fff; font: bold 11px/16px "Liberation Sans", sans-serif; }
.radio { display: flex; }
.radio input { appearance: none; width: 13px; height: 13px; margin: 0; border: 1px solid #222; border-radius: 50%; background: radial-gradient(#222 2px, #fff 3px); }
.cube { margin: 16px 1px 0 0; }
.cubetext { font: 700 9px Roboto, "Liberation Sans", sans-serif; fill: #999; }
.axes { font: 700 12px "Open Sans", sans-serif; }

.bottom { display: grid; grid-template-columns: 1fr auto 1fr; align-items: end; }
.comments { border-top: 0; padding-left: 24px; }
.navbar { display: flex; align-items: center; width: 236px; height: 24px; margin-bottom: 2px; padding-right: 3px; background: #f1f1f1; }
.navbar button { width: 26px; }
.navbar .drop { width: auto; gap: 1px; margin-left: 6px; }
.navbar .roomy { gap: 4px; }
.navbar .drop:first-child { margin-left: 3px; }
.assist { justify-self: end; margin: 0 8px 4px 0; }

.timeline { height: 50px; display: flex; border-top: 1px solid #cfcfcf; background: #f0f0f0; }
.play { display: flex; padding-left: 3px; width: 142px; }
.play button { width: 25px; height: 48px; }
.history { flex: none; padding-top: 15px; }
.history ol { display: flex; margin: 0; padding: 0; list-style: none; }
.history li { width: 24px; display: flex; flex-direction: column; align-items: center; }
.history li svg { width: 16px; height: 16px; }
.history li::after { content: ""; width: 2px; height: 5px; margin-top: 3px; background: #c8c8c8; }
.rail { height: 2px; margin: 0 11px; background: #c8c8c8; }
.marker { margin: 9px 0 0 -6px; }
.gear { width: 28px; height: 48px; margin: 0 7px 0 auto; }
```
